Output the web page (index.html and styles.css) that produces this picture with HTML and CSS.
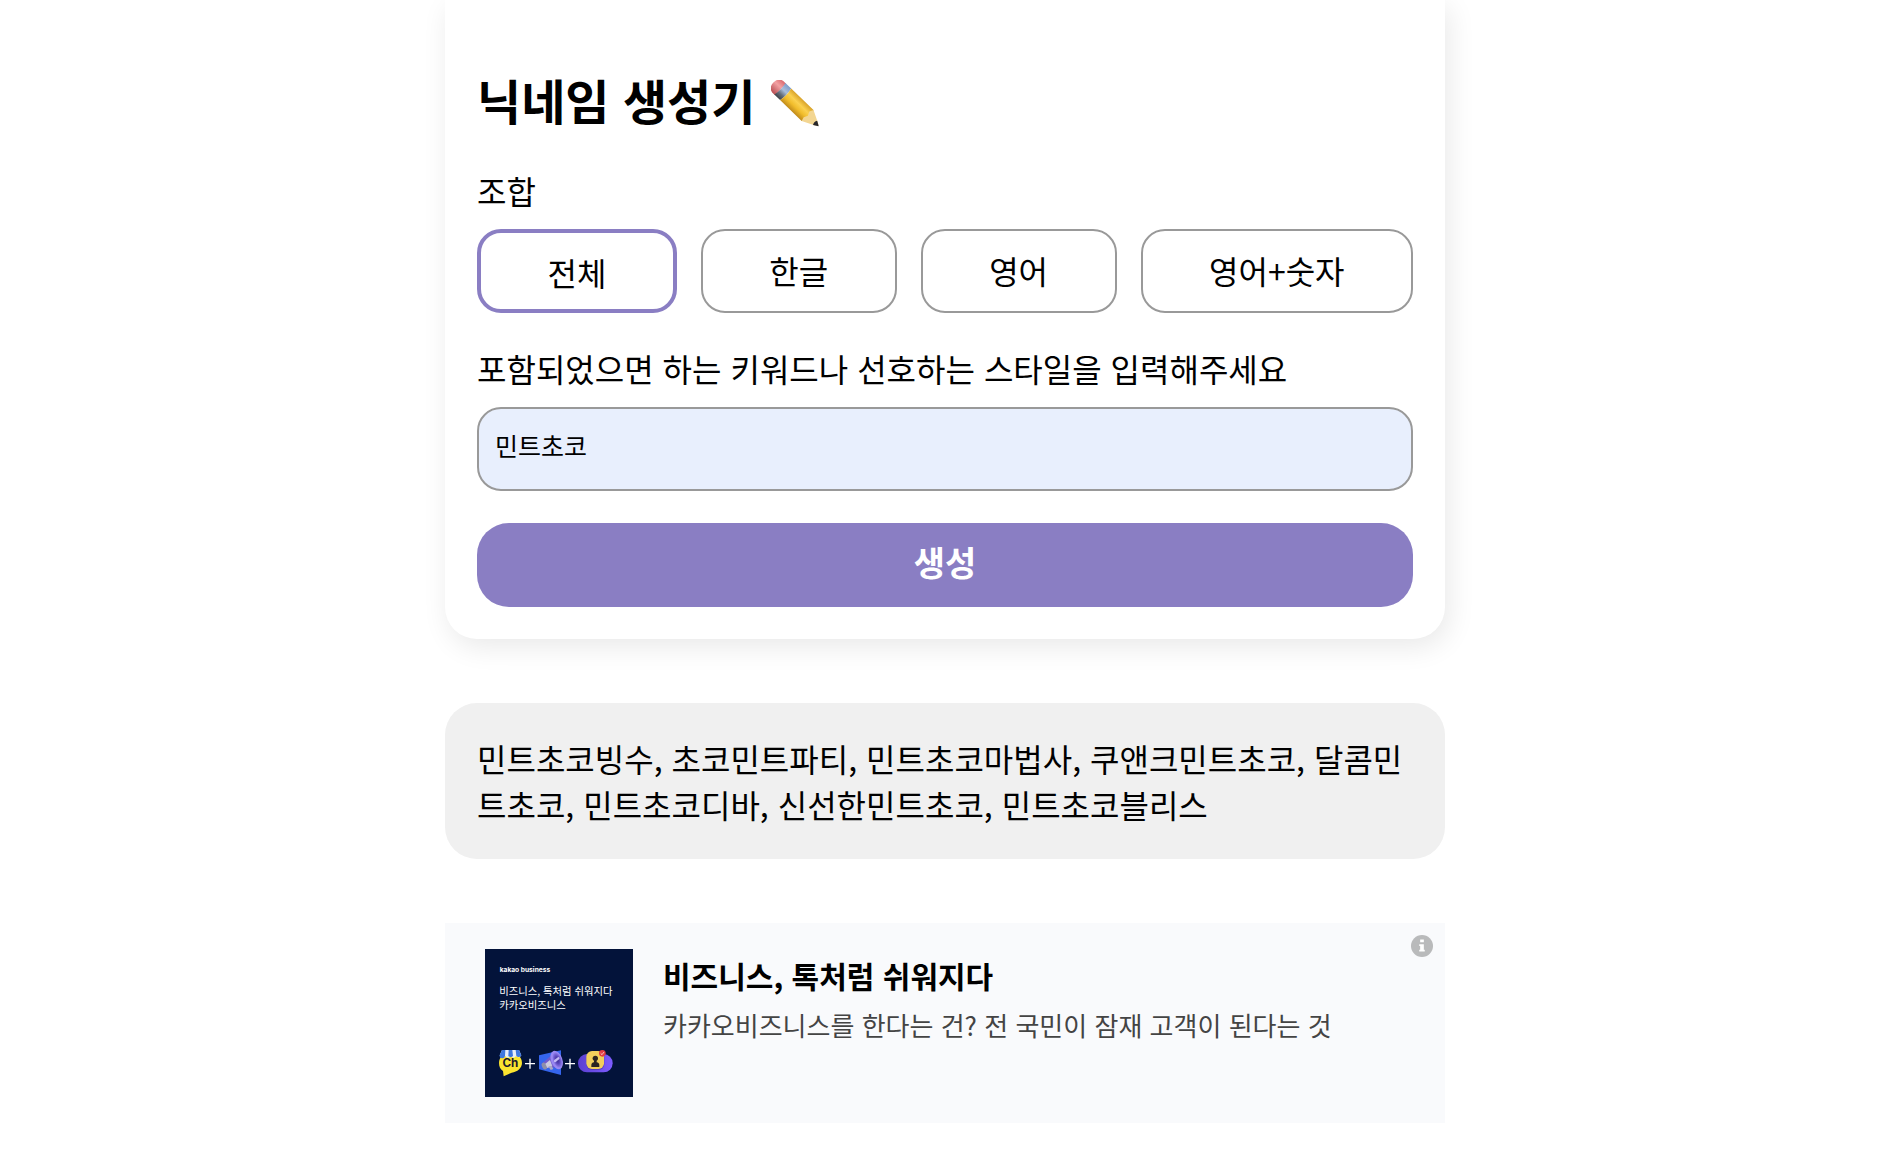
FILE: index.html
```
<!DOCTYPE html>
<html lang="ko">

<head>
  <meta charset="UTF-8" />
  <meta name="viewport" content="width=device-width, initial-scale=1.0" />
  <title>닉네임 생성기</title>

  <link rel="stylesheet" href="styles.css">
</head>

<body>

  <main class="container">

    <!-- Generator form -->
    <form class="card" onsubmit="return false">
      <h1 class="title">
        닉네임 생성기
        <svg class="pencil" viewBox="0 0 48 48" aria-hidden="true">
          <defs>
            <linearGradient id="wood" x1="0" y1="0" x2="0" y2="1">
              <stop offset="0" stop-color="#d9a32a" />
              <stop offset="0.35" stop-color="#fbd150" />
              <stop offset="0.65" stop-color="#f1bd2c" />
              <stop offset="1" stop-color="#c08a1b" />
            </linearGradient>
            <linearGradient id="metal" x1="0" y1="0" x2="0" y2="1">
              <stop offset="0" stop-color="#7d9cc9" />
              <stop offset="0.4" stop-color="#a9bedb" />
              <stop offset="0.7" stop-color="#66707d" />
              <stop offset="1" stop-color="#3e4248" />
            </linearGradient>
            <linearGradient id="rubber" x1="0" y1="0" x2="0" y2="1">
              <stop offset="0" stop-color="#d9696f" />
              <stop offset="0.4" stop-color="#f3a1a3" />
              <stop offset="1" stop-color="#b84e53" />
            </linearGradient>
          </defs>
          <g transform="translate(6 6) rotate(44)">
            <path d="M5 -8H1Q-5 -7 -5 0T1 8H5Z" fill="url(#rubber)" />
            <path d="M4 -8H12Q14 0 12 8H4Q6 0 4 -8Z" fill="url(#metal)" />
            <path d="M12 -8H43L46 -3L43 1L45 5L42 8H12Q14 0 12 -8Z" fill="url(#wood)" />
            <path d="M43 -8L57 -1V1L42 8L41 4L43 0L41 -4Z" fill="#f3d692" />
            <path d="M53 -3L58 0L53 3Q51 0 53 -3Z" fill="#26262a" />
          </g>
        </svg>
      </h1>

      <fieldset class="field">
        <legend class="label">조합</legend>
        <div class="options">
          <label class="option"><input type="radio" name="type" value="all" checked>전체</label>
          <label class="option"><input type="radio" name="type" value="ko">한글</label>
          <label class="option"><input type="radio" name="type" value="en">영어</label>
          <label class="option"><input type="radio" name="type" value="en-num">영어+숫자</label>
        </div>
      </fieldset>

      <div class="field">
        <label class="label" for="keyword">포함되었으면 하는 키워드나 선호하는 스타일을 입력해주세요</label>
        <input class="keyword" id="keyword" type="text" value="민트초코">
      </div>

      <button class="submit" type="submit">생성</button>
    </form>

    <!-- Generated nicknames -->
    <p class="result">민트초코빙수, 초코민트파티, 민트초코마법사, 쿠앤크민트초코, 달콤민트초코, 민트초코디바, 신선한민트초코, 민트초코블리스</p>

    <!-- Advertisement -->
    <aside class="ad">
      <a class="ad-link" href="#">
        <svg class="ad-thumb" viewBox="0 0 444 444" role="img" aria-label="kakao business">
          <defs>
            <linearGradient id="pill" x1="0" y1="0" x2="1" y2="0">
              <stop offset="0" stop-color="#5b3fd0" />
              <stop offset="1" stop-color="#7d5cff" />
            </linearGradient>
            <radialGradient id="horn">
              <stop offset="0" stop-color="#3a2a8c" />
              <stop offset="0.5" stop-color="#5c48bd" />
              <stop offset="1" stop-color="#9482ee" />
            </radialGradient>
          </defs>
          <rect width="444" height="444" fill="#03133a" />
          <text class="ad-brand" x="44" y="68">kakao business</text>
          <text class="ad-copy" x="43" y="138">비즈니스, 톡처럼 쉬워지다</text>
          <text class="ad-copy" x="43" y="180">카카오비즈니스</text>

          <!-- Channel -->
          <path d="M76 312C97 312 111 324 111 342C111 357 97 369 80 371L56 382L54 366C46 361 42 353 42 342C42 324 56 312 76 312Z" fill="#fbe42f" />
          <path d="M51 303H102L109 319A9 9 0 0 1 93 321A9 9 0 0 1 77 321A9 9 0 0 1 61 321A9 9 0 0 1 44 319Z" fill="#e8eefb" />
          <path d="M51 303H61L60 321A8 8 0 0 1 44 319ZM71 303H82L84 321Q77 328 70 321ZM92 303H102L109 319A9 9 0 0 1 94 321Z" fill="#3f78e0" />
          <text class="ad-ch" x="76" y="355">Ch</text>

          <!-- Megaphone -->
          <path d="M162 319L228 304V378L162 361Z" fill="#3565ed" />
          <path d="M169 346L212 307L224 354L182 357Z" fill="#705bcc" />
          <ellipse cx="178" cy="351" rx="7" ry="11" fill="#8d8fa8" transform="rotate(-25 178 351)" />
          <path d="M181 344L195 333L202 351L187 357Z" fill="#c9c8df" />
          <path d="M190 352L200 350L205 360L197 363Z" fill="#aaa8c4" />
          <ellipse cx="215" cy="333" rx="17" ry="29" fill="#9a88f2" transform="rotate(-20 215 333)" />
          <ellipse cx="217" cy="333" rx="13" ry="24" fill="url(#horn)" transform="rotate(-20 217 333)" />
          <path d="M210 336L220 328" stroke="#c3baf4" stroke-width="7" stroke-linecap="round" />

          <!-- Profile -->
          <rect x="279" y="315" width="104" height="55" rx="27" fill="url(#pill)" />
          <rect x="304" y="309" width="54" height="54" rx="17" fill="#30248b" opacity="0.4" />
          <rect x="304" y="306" width="53" height="54" rx="17" fill="#f1cf5c" />
          <circle cx="331" cy="328" r="8" fill="#2b2521" />
          <path d="M327 334H335V340Q343 341 343 349V354H319V349Q319 341 327 340Z" fill="#2b2521" />
          <circle cx="352" cy="313" r="10" fill="#e33c43" />
          <path d="M347 313L351 317L357 309" fill="none" stroke="#fff" stroke-width="2" />

          <path d="M135 329V359M120 344H150M255 329V359M240 344H270" stroke="#fff" stroke-width="4" />
        </svg>
        <span class="ad-text">
          <strong class="ad-title">비즈니스, 톡처럼 쉬워지다</strong>
          <span class="ad-desc">카카오비즈니스를 한다는 건? 전 국민이 잠재 고객이 된다는 것</span>
        </span>
      </a>
      <button class="ad-info" type="button" aria-label="광고 정보">
        <svg viewBox="0 0 24 24" aria-hidden="true">
          <circle cx="12" cy="12" r="12" fill="#b9babb" />
          <path d="M10 5H14V8H10ZM9 10H14V16H15V18H9V16H10V12H9Z" fill="#fff" />
        </svg>
      </button>
    </aside>

  </main>

</body>

</html>
```
FILE: styles.css
```
* {
  box-sizing: border-box;
}

body {
  margin: 0;
  padding: 0 2px 0 0;
  background-color: #fff;
  color: #000;
  font-family: "Noto Sans CJK KR", sans-serif;
  font-size: 32px;
  line-height: 46px;
}

.container {
  display: flex;
  flex-direction: column;
  gap: 64px;
  max-width: 1000px;
  margin: 0 auto;
}

/* Generator form */
.card {
  display: flex;
  flex-direction: column;
  gap: 32px;
  padding: 64px 32px 32px;
  border-radius: 0 0 32px 32px;
  background-color: #fff;
  box-shadow: 4px 8px 28px rgba(0, 0, 0, 0.09);
}

.title {
  display: flex;
  align-items: center;
  gap: 16px;
  margin: 0;
  font-size: 48px;
  font-weight: 700;
  line-height: 71px;
}

.pencil {
  width: 48px;
  height: 48px;
  margin-top: 8px;
}

.field {
  min-width: 0;
  margin: 0;
  padding: 0;
  border: 0;
}

.label {
  display: block;
  margin-bottom: 16px;
  padding: 0;
}

.options {
  display: flex;
  gap: 24px;
}

.option {
  flex: 1 1 auto;
  height: 84px;
  padding-top: 16px;
  border: 2px solid #999;
  border-radius: 24px;
  text-align: center;
  cursor: pointer;
}

.option:has(input:checked) {
  border: 4px solid #8a7ec3;
}

/* The radio itself is hidden, the label is the button */
.option input {
  position: absolute;
  margin: 0;
  opacity: 0;
  appearance: none;
}

.keyword {
  display: block;
  width: 100%;
  height: 84px;
  padding: 0 16px 8px;
  border: 2px solid #999;
  border-radius: 24px;
  background-color: #e8effd;
  color: #000;
  font-family: inherit;
  font-size: 25px;
}

.submit {
  height: 84px;
  padding: 0 0 8px;
  border: 0;
  border-radius: 32px;
  background-color: #8a7ec3;
  color: #fff;
  font-family: inherit;
  font-size: 34px;
  font-weight: 700;
  cursor: pointer;
}

/* Generated nicknames */
.result {
  margin: 0;
  padding: 32px;
  border-radius: 32px;
  background-color: #f0f0f0;
}

/* Advertisement */
.ad {
  position: relative;
  background-color: #f9fafc;
}

.ad-link {
  display: flex;
  gap: 30px;
  padding: 26px 40px;
  color: #000;
  text-decoration: none;
}

.ad-thumb {
  flex: none;
  width: 148px;
  height: 148px;
}

.ad-brand {
  fill: #fff;
  font-family: Inter, sans-serif;
  font-size: 20px;
  font-weight: 700;
}

.ad-copy {
  fill: #fff;
  font-size: 31px;
}

.ad-ch {
  fill: #1b1b2b;
  font-family: Inter, sans-serif;
  font-size: 35px;
  font-weight: 700;
  text-anchor: middle;
}

.ad-text {
  display: flex;
  flex-direction: column;
  gap: 2px;
  padding-top: 2px;
}

.ad-title {
  font-size: 30px;
  font-weight: 700;
  line-height: 48px;
}

.ad-desc {
  color: #444;
  font-size: 26px;
  line-height: 48px;
}

.ad-info {
  position: absolute;
  top: 12px;
  right: 12px;
  width: 22px;
  height: 22px;
  padding: 0;
  border: 0;
  background: none;
  cursor: pointer;
}

.ad-info svg {
  display: block;
}
```
